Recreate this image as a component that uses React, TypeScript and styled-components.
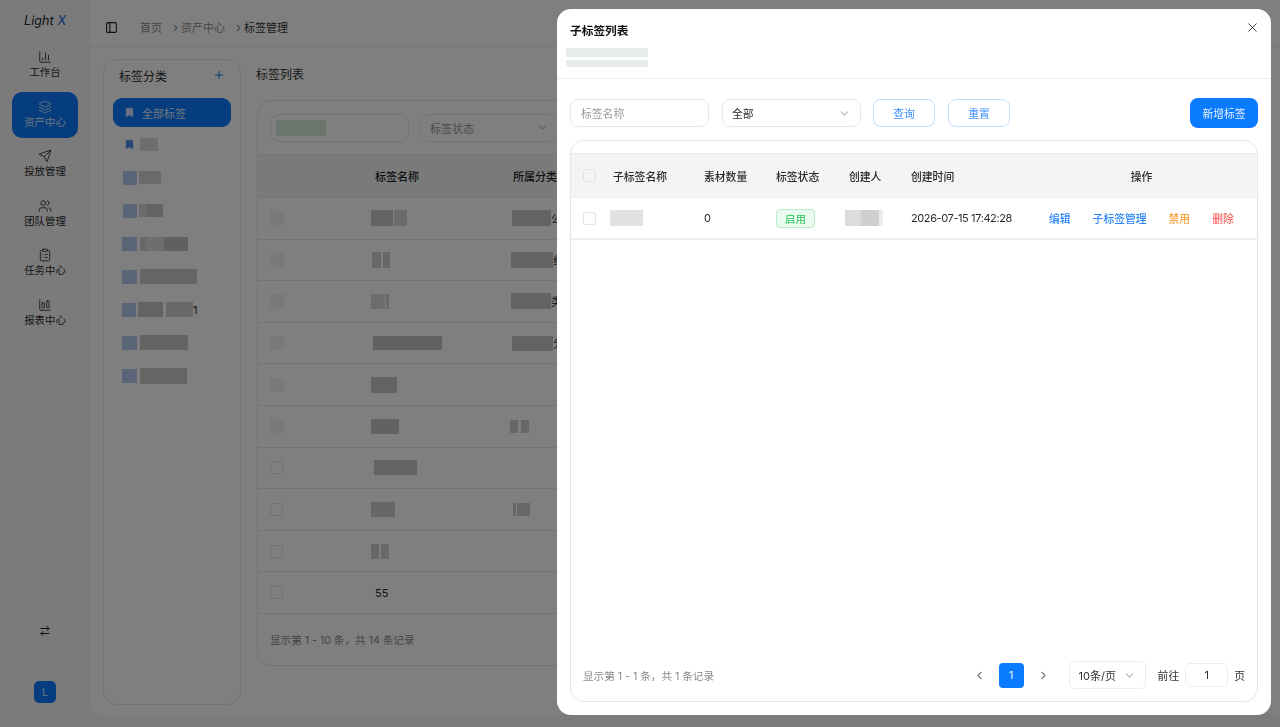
import React from "react";
import styled, { createGlobalStyle } from "styled-components";
import {
  ChartColumn, Layers, Send, Users, ClipboardList, ChartColumnBig, PanelLeft, ArrowRightLeft,
  Bookmark, Plus, X, ChevronDown, ChevronLeft, ChevronRight,
} from "lucide-react";

const Global = createGlobalStyle`
  html, body { margin: 0; padding: 0; height: 100%; overflow: hidden; background: #f7f7f7; }
  * { box-sizing: border-box; }
  body { font-family: Inter, "Noto Sans CJK SC", sans-serif; font-size: 11px; color: #1f1f1f; }
`;

const Page = styled.div`display: flex; width: 1280px; height: 727px; overflow: hidden;`;
const Sidebar = styled.aside`width: 90px; flex: none; display: flex; flex-direction: column; align-items: center; padding: 0 12px;`;
const Logo = styled.div`height: 42px; padding-top: 13px; font-size: 12.5px; font-style: italic; line-height: 16px; letter-spacing: .1px; b { font-weight: 400; color: #0a5fd0; }`;
const Nav = styled.nav`display: flex; flex-direction: column; gap: 3.5px; width: 66px; flex: 1;`;
const NavItem = styled.div<{ $active?: boolean }>`
  height: 46px; border-radius: 10px; display: flex; flex-direction: column; align-items: center; justify-content: center; gap: 2px;
  font-size: 10.4px; line-height: 14px;
  background: ${(p) => (p.$active ? "#0a7aff" : "transparent")};
  color: ${(p) => (p.$active ? "#dcebff" : "#2a2a2a")};
  svg { width: 14px; height: 14px; stroke-width: 1.5; }
`;
const Swap = styled.div`height: 26px; display: flex; align-items: center; justify-content: center; margin-bottom: 13px; padding-top: 2px; svg { width: 12px; height: 12px; }`;
const Divider = styled.div`width: 66px; height: 1px; background: #ececec; margin-bottom: 24px;`;
const Avatar = styled.div`width: 22px; height: 22px; border-radius: 5px; background: #0a7aff; color: #cfe3ff; display: flex; align-items: center; justify-content: center; font-size: 10.5px; margin-bottom: 24px;`;

const Main = styled.main`flex: 1; min-width: 0; height: 715px; background: #fff; border-radius: 0 0 0 14px; display: flex; flex-direction: column; overflow: hidden;`;
const Header = styled.header`height: 47px; flex: none; border-bottom: 1px solid #eaeaea; display: flex; align-items: center; padding: 8px 0 0 15px; font-size: 11px; color: #8a8a8a; svg { width: 13px; height: 13px; color: #222; margin-right: 22px; }`;
const Crumb = styled.span<{ $current?: boolean }>`color: ${(p) => (p.$current ? "#333" : "#8c8c8c")};`;
const Sep = styled.span`width: 7px; margin: 0 2px 0 10px; font-size: 13px; line-height: 14px; color: #8c8c8c; text-align: center;`;
const Body = styled.div`flex: 1; min-height: 0; display: flex; padding: 12px 0 10px 13px; gap: 15px;`;

const CatPanel = styled.section`width: 138px; flex: none; border: 1px solid #e6e6e6; border-radius: 14px; padding: 0 9px;`;
const CatHead = styled.div`height: 38px; display: flex; align-items: center; justify-content: space-between; padding: 0 6px 8px; font-size: 12px; color: #2c2c2c; svg { width: 12px; height: 12px; color: #0a7aff; }`;
const CatActive = styled.div`height: 29px; border-radius: 9px; background: #0a7aff; color: #dcebff; display: flex; align-items: center; gap: 7px; padding-left: 11px; font-size: 11px; margin-bottom: 1px; svg { width: 11px; height: 11px; fill: #cfe3ff; stroke: #cfe3ff; }`;
const CatRow = styled.div`height: 33px; display: flex; align-items: center; font-size: 11px;`;
const BlueIcon = styled.span<{ $w: number; $ml: number }>`width: ${(p) => p.$w}px; height: 14px; margin-left: ${(p) => p.$ml}px; margin-right: 2px; background: #b5cdee; flex: none;`;
const SmallMark = styled.span`margin-left: 11px; margin-right: 5px; display: flex; svg { width: 11px; height: 11px; fill: #4a8fe8; stroke: #4a8fe8; }`;
const Seg = styled.span<{ $w: number; $c: string; $h: number; $ml: number }>`display: inline-block; flex: none; width: ${(p) => p.$w}px; height: ${(p) => p.$h}px; margin-left: ${(p) => p.$ml}px; background: ${(p) => p.$c};`;

const ListArea = styled.section`flex: 1; min-width: 0; display: flex; flex-direction: column; padding-bottom: 39px;`;
const ListTitle = styled.div`height: 41px; flex: none; display: flex; align-items: center; font-size: 12px; color: #333; padding-bottom: 13px;`;
const ListCard = styled.div`flex: 1; margin-left: 1px; width: 1000px; border: 1px solid #e6e6e6; border-radius: 14px; overflow: hidden;`;
const ListFilters = styled.div`height: 53px; display: flex; align-items: center; gap: 11px; padding: 0 12px;`;
const ListInput = styled.div`width: 139px; height: 28px; border: 1.5px solid #e8e8e8; border-radius: 9px; display: flex; align-items: center; padding-left: 5px;`;
const GreenMark = styled.span`width: 50px; height: 16px; background: #d8ecdf;`;
const ListSelect = styled.div`width: 139px; height: 28px; border: 1.5px solid #e8e8e8; border-radius: 9px; display: flex; align-items: center; justify-content: space-between; padding: 0 9px; color: #9a9a9a; font-size: 11px; svg { width: 13px; height: 13px; color: #bbb; }`;
const ListHead = styled.div`height: 44px; background: #f4f4f4; border-top: 1px solid #ececec; border-bottom: 1px solid #ececec; display: grid; grid-template-columns: 113px 142px 1fr; align-items: center; font-size: 11px; font-weight: 500;`;
const ListRow = styled.div`height: 41.6px; border-bottom: 1px solid #e8e8e8; display: grid; grid-template-columns: 113px 142px 1fr; align-items: center; font-size: 11px;`;
const Cell = styled.div`display: flex; align-items: center; min-width: 0;`;
const CheckCell = styled(Cell)`padding-left: 12px;`;
const Ghost = styled.span`width: 14px; height: 14px; background: #f3f3f3;`;
const Check = styled.span`width: 13px; height: 13px; border: 1.5px solid #e2e2e2; border-radius: 3px; background: #fff;`;
const HeadCheck = styled(Check)`background: #f4f4f4;`;
const NameText = styled.span`margin-left: 4px; font-size: 11px;`;
const ListFooter = styled.div`height: 52px; display: flex; align-items: center; padding: 0 12px; color: #8a8a8a; font-size: 10.6px;`;

const Overlay = styled.div`position: fixed; inset: 0; background: rgba(0, 0, 0, .5); display: flex; justify-content: flex-end; padding: 9px 9px 12px;`;
const Modal = styled.div`width: 714px; height: 706px; background: #fff; border-radius: 14px; display: flex; flex-direction: column; overflow: hidden; position: relative;`;
const ModalHead = styled.div`height: 70px; flex: none; border-bottom: 1px solid #ececec; padding: 14px 13px 0 9px;`;
const ModalTitle = styled.div`font-size: 11.7px; font-weight: 600; color: #111; line-height: 16px; padding-left: 4px; margin-bottom: 9px;`;
const Sub = styled.div`width: 82px; height: 9px; background: #e7eeea; margin-bottom: 3px; &:last-child { height: 7px; margin-bottom: 0; }`;
const Close = styled.div`position: absolute; right: 11px; top: 11px; color: #444; display: flex; svg { width: 15px; height: 15px; stroke-width: 1.6; }`;
const ModalBody = styled.div`flex: 1; min-height: 0; display: flex; flex-direction: column; padding: 19px 13px 13px;`;
const Toolbar = styled.div`height: 30px; flex: none; display: flex; align-items: center; gap: 13px; margin-bottom: 12px;`;
const Input = styled.div`width: 139px; height: 28px; border: 1.5px solid #e8e8e8; border-radius: 8px; display: flex; align-items: center; padding: 0 10px; color: #9a9a9a; font-size: 10.8px;`;
const Select = styled(Input)`justify-content: space-between; color: #2c2c2c; padding: 0 9px 0 9px; margin-right: -1px; svg { width: 13px; height: 13px; color: #b5b5b5; }`;
const Outline = styled.div`width: 62px; height: 28px; border: 1.5px solid #c4ddff; border-radius: 8px; display: flex; align-items: center; justify-content: center; color: #3d8ffb; font-size: 10.8px;`;
const Primary = styled.div`margin-left: auto; width: 68px; height: 30px; border-radius: 8px; background: #0a7aff; color: #e8f2ff; display: flex; align-items: center; justify-content: center; font-size: 10.8px;`;
const TableCard = styled.div`flex: 1; min-height: 0; border: 1px solid #e6e6e6; border-radius: 14px; padding-top: 12px; display: flex; flex-direction: column; overflow: hidden;`;
const MGrid = styled.div`display: grid; grid-template-columns: 42px 91px 72px 73px 62px 127px 1fr; align-items: center;`;
const MHead = styled(MGrid)`height: 45px; background: #f4f4f4; border-top: 1px solid #ececec; border-bottom: 1px solid #ececec; font-size: 10.8px; font-weight: 500; color: #2b2b2b;`;
const MRow = styled(MGrid)`height: 42px; border-bottom: 2px solid #f0f0f0; font-size: 11px; color: #2b2b2b;`;
const MCheck = styled(Cell)`padding-left: 12px;`;
const OpsHead = styled.div`text-align: center; padding-right: 12px;`;
const Ops = styled.div`display: flex; gap: 22px; padding-left: 11px; font-size: 10.8px; font-weight: 500;`;
const Op = styled.span<{ $c: string }>`color: ${(p) => p.$c};`;
const Tag = styled.span`display: inline-flex; align-items: center; justify-content: center; width: 39px; height: 19px; border: 1px solid #b9ecc6; background: #eafbef; border-radius: 4px; color: #25c35c; font-size: 10.5px;`;
const DateText = styled.div`letter-spacing: -0.4px;`;
const Filler = styled.div`flex: 1;`;
const Pager = styled.div`height: 52px; flex: none; display: flex; align-items: center; padding: 0 12px; color: #8a8a8a; font-size: 10.6px;`;
const PagerRight = styled.div`margin-left: auto; display: flex; align-items: center; color: #333; font-size: 10.8px;`;
const Arrow = styled.span`width: 25px; display: flex; justify-content: center; color: #777; svg { width: 13px; height: 13px; }`;
const PageNo = styled.span`width: 25px; height: 25px; border-radius: 4px; background: #0a7aff; color: #e8f2ff; display: flex; align-items: center; justify-content: center; font-size: 11px; margin: 0 7px;`;
const SizeSelect = styled.div`width: 77px; height: 28px; border: 1.5px solid #ececec; border-radius: 5px; display: flex; align-items: center; justify-content: space-between; padding: 0 9px; margin: 0 12px 0 13px; font-size: 11px; svg { width: 13px; height: 13px; color: #b5b5b5; }`;
const Goto = styled.div`width: 43px; height: 24px; border: 1.5px solid #ececec; border-radius: 5px; display: flex; align-items: center; justify-content: center; margin: 0 6px; font-size: 11px;`;

type S = [number, string, number, number?];
const Redact = ({ segs }: { segs: S[] }) => (
  <>{segs.map((s, i) => <Seg key={i} $w={s[0]} $c={s[1]} $h={s[2]} $ml={s[3] ?? 0} />)}</>
);

const navItems = [
  { label: "工作台", Icon: ChartColumn },
  { label: "资产中心", Icon: Layers, active: true },
  { label: "投放管理", Icon: Send },
  { label: "团队管理", Icon: Users },
  { label: "任务中心", Icon: ClipboardList },
  { label: "报表中心", Icon: ChartColumnBig },
];

const cats: { w: number; ml: number; segs: S[]; tail?: string }[] = [
  { w: 14, ml: 10, segs: [[22, "#d4d4d4", 13]] },
  { w: 14, ml: 10, segs: [[7, "#d8d8d8", 13], [17, "#c8c8c8", 13]] },
  { w: 15, ml: 9, segs: [[6, "#cfcfcf", 14, 1], [18, "#dcdcdc", 14], [24, "#c0c0c0", 14]] },
  { w: 15, ml: 9, segs: [[57, "#cbcbcb", 15, 1]] },
  { w: 14, ml: 9, segs: [[25, "#c6c6c6", 15], [27, "#d0d0d0", 15, 3]], tail: "1" },
  { w: 15, ml: 9, segs: [[48, "#c8c8c8", 15, 1]] },
  { w: 15, ml: 9, segs: [[47, "#cacaca", 16, 1]] },
];

const rows: { ghost: boolean; name?: S[]; nameMl?: number; text?: string; cat?: S[]; catMl?: number; ch?: string }[] = [
  { ghost: true, nameMl: 0, name: [[22, "#c8c8c8", 16], [13, "#d4d4d4", 16, 1]], catMl: -1, cat: [[39, "#c8c8c8", 16]], ch: "公" },
  { ghost: true, nameMl: 1, name: [[9, "#d0d0d0", 16], [7, "#cfcfcf", 16, 2]], catMl: -2, cat: [[42, "#c6c6c6", 16]], ch: "线" },
  { ghost: true, nameMl: 0, name: [[14, "#d8d8d8", 15], [3, "#d0d0d0", 15, 1]], catMl: -2, cat: [[40, "#c6c6c6", 16]], ch: "类" },
  { ghost: true, nameMl: 2, name: [[69, "#c2c2c2", 14]], catMl: -1, cat: [[41, "#c6c6c6", 15]], ch: "分" },
  { ghost: true, nameMl: 0, name: [[26, "#c6c6c6", 16]] },
  { ghost: true, nameMl: 0, name: [[28, "#c4c4c4", 15]], catMl: -3, cat: [[8, "#cccccc", 13], [8, "#d0d0d0", 13, 3]] },
  { ghost: false, nameMl: 3, name: [[43, "#c6c6c6", 15]] },
  { ghost: false, nameMl: 0, name: [[24, "#cecece", 15]], catMl: 0, cat: [[3, "#cccccc", 13], [13, "#d0d0d0", 13, 1]] },
  { ghost: false, nameMl: 0, name: [[8, "#cecece", 15], [8, "#d2d2d2", 15, 2]] },
  { ghost: false, text: "55" },
];

export default function App() {
  return (
    <>
      <Global />
      <Page>
        <Sidebar>
          <Logo>Light <b>X</b></Logo>
          <Nav>
            {navItems.map(({ label, Icon, active }) => (
              <NavItem key={label} $active={active}><Icon />{label}</NavItem>
            ))}
          </Nav>
          <Swap><ArrowRightLeft /></Swap>
          <Divider />
          <Avatar>L</Avatar>
        </Sidebar>
        <Main>
          <Header>
            <PanelLeft />
            <Crumb>首页</Crumb>
            <Sep>›</Sep>
            <Crumb>资产中心</Crumb>
            <Sep>›</Sep>
            <Crumb $current>标签管理</Crumb>
          </Header>
          <Body>
            <CatPanel>
              <CatHead>标签分类<Plus /></CatHead>
              <CatActive><Bookmark />全部标签</CatActive>
              <CatRow>
                <SmallMark><Bookmark /></SmallMark>
                <Seg $w={18} $c="#dcdcdc" $h={13} $ml={0} />
              </CatRow>
              {cats.map((c, i) => (
                <CatRow key={i}>
                  <BlueIcon $w={c.w} $ml={c.ml} />
                  <Redact segs={c.segs} />
                  {c.tail}
                </CatRow>
              ))}
            </CatPanel>
            <ListArea>
              <ListTitle>标签列表</ListTitle>
              <ListCard>
                <ListFilters>
                  <ListInput><GreenMark /></ListInput>
                  <ListSelect>标签状态<ChevronDown /></ListSelect>
                </ListFilters>
                <ListHead>
                  <CheckCell><Ghost /></CheckCell>
                  <Cell><NameText>标签名称</NameText></Cell>
                  <Cell>所属分类</Cell>
                </ListHead>
                {rows.map((r, i) => (
                  <ListRow key={i}>
                    <CheckCell>{r.ghost ? <Ghost /> : <Check />}</CheckCell>
                    <Cell>
                      {r.name && <Seg $w={0} $c="transparent" $h={0} $ml={r.nameMl ?? 0} />}
                      {r.name && <Redact segs={r.name} />}
                      {r.text && <NameText>{r.text}</NameText>}
                    </Cell>
                    <Cell>
                      {r.cat && <Seg $w={0} $c="transparent" $h={0} $ml={r.catMl ?? 0} />}
                      {r.cat && <Redact segs={r.cat} />}
                      {r.ch}
                    </Cell>
                  </ListRow>
                ))}
                <ListFooter>显示第 1 - 10 条，共 14 条记录</ListFooter>
              </ListCard>
            </ListArea>
          </Body>
        </Main>
      </Page>
      <Overlay>
        <Modal>
          <ModalHead>
            <ModalTitle>子标签列表</ModalTitle>
            <Sub />
            <Sub />
          </ModalHead>
          <Close><X /></Close>
          <ModalBody>
            <Toolbar>
              <Input>标签名称</Input>
              <Select>全部<ChevronDown /></Select>
              <Outline>查询</Outline>
              <Outline>重置</Outline>
              <Primary>新增标签</Primary>
            </Toolbar>
            <TableCard>
              <MHead>
                <MCheck><HeadCheck /></MCheck>
                <div>子标签名称</div>
                <div>素材数量</div>
                <div>标签状态</div>
                <div>创建人</div>
                <div>创建时间</div>
                <OpsHead>操作</OpsHead>
              </MHead>
              <MRow>
                <MCheck><Check /></MCheck>
                <Cell><Seg $w={33} $c="#e2e2e2" $h={16} $ml={-3} /></Cell>
                <div>0</div>
                <Cell><Tag>启用</Tag></Cell>
                <Cell><Redact segs={[[16, "#dcdcdc", 16, -4], [18, "#cfcfcf", 16], [4, "#ececec", 16]]} /></Cell>
                <DateText>2026-07-15 17:42:28</DateText>
                <Ops>
                  <Op $c="#2b86f5">编辑</Op>
                  <Op $c="#2b86f5">子标签管理</Op>
                  <Op $c="#f5a13a">禁用</Op>
                  <Op $c="#f76b6b">删除</Op>
                </Ops>
              </MRow>
              <Filler />
              <Pager>
                显示第 1 - 1 条，共 1 条记录
                <PagerRight>
                  <Arrow><ChevronLeft /></Arrow>
                  <PageNo>1</PageNo>
                  <Arrow><ChevronRight /></Arrow>
                  <SizeSelect>10条/页<ChevronDown /></SizeSelect>
                  前往
                  <Goto>1</Goto>
                  页
                </PagerRight>
              </Pager>
            </TableCard>
          </ModalBody>
        </Modal>
      </Overlay>
    </>
  );
}
